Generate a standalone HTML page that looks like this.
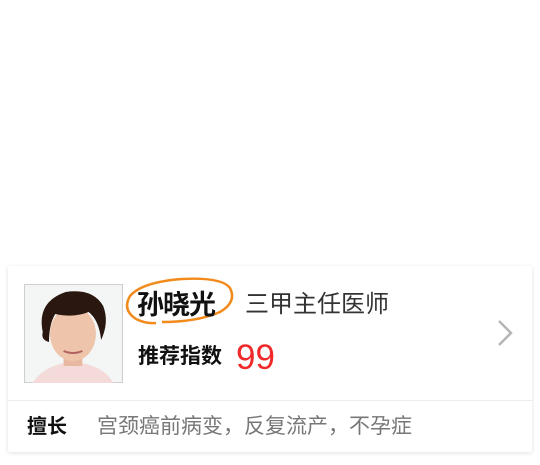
<!DOCTYPE html>
<html><head><meta charset="utf-8"><style>
body{margin:0;width:540px;height:465px;background:#fff;position:relative;overflow:hidden;font-family:"Liberation Sans","Noto Sans CJK SC",sans-serif}
.card{position:absolute;left:8px;top:266px;width:524px;height:186px;background:#fff;box-shadow:0 1px 5px rgba(0,0,0,0.12);border-radius:2px}
.div{position:absolute;left:8px;top:400px;width:524px;height:1px;background:#ececec}
.t{position:absolute;white-space:nowrap}
</style></head><body>
<div class="card"></div>
<div class="div"></div>
<svg style="position:absolute;left:24px;top:284px" width="99" height="99" viewBox="0 0 95 99" preserveAspectRatio="none">
<rect x="0.5" y="0.5" width="94" height="98" fill="#f4f6f5" stroke="#cfcfcf"/>
<path d="M8 99 Q20 80 47 78 Q75 80 86 99Z" fill="#f5dada"/>
<rect x="38" y="62" width="18" height="20" fill="#e8b8a0"/>
<ellipse cx="47" cy="50" rx="22" ry="27" fill="#eec4aa"/>
<path d="M18 48 Q12 18 40 8 Q66 4 76 22 Q82 38 74 56 Q72 36 62 28 Q48 34 30 30 Q24 40 24 58 Q16 56 18 48Z" fill="#2a1810"/>
<path d="M38 67 Q47 71 56 67" stroke="#b06060" stroke-width="2" fill="none"/>
</svg>
<svg style="position:absolute;left:122px;top:274px" width="115" height="56" viewBox="0 0 115 56">
<path d="M40 48 Q75 48 98 38 Q115 28 108 14 Q100 3 60 5 Q20 8 8 22 Q0 36 14 45 Q24 50 34 49" stroke="#f28a1c" stroke-width="2.5" fill="none"/>
</svg>
<div class="t" style="left:137px;top:288px;font-size:27px;font-weight:bold;color:#111;line-height:34px;letter-spacing:-1px">孙晓光</div>
<div class="t" style="left:245px;top:289px;font-size:24px;color:#333;line-height:32px">三甲主任医师</div>
<div class="t" style="left:138px;top:343px;font-size:21px;font-weight:bold;color:#111;line-height:28px">推荐指数</div>
<div class="t" style="left:236px;top:338px;font-size:35px;color:#f02a2a;line-height:40px">99</div>
<svg style="position:absolute;left:494px;top:318px" width="24" height="30" viewBox="0 0 24 30"><path d="M5 3 L17 15 L5 27" stroke="#b5b5b5" stroke-width="2.5" fill="none"/></svg>
<div class="t" style="left:27px;top:413px;font-size:20px;font-weight:bold;color:#111;line-height:28px">擅长</div>
<div class="t" style="left:97px;top:413px;font-size:21px;color:#777;line-height:28px">宫颈癌前病变，反复流产，不孕症</div>
</body></html>
